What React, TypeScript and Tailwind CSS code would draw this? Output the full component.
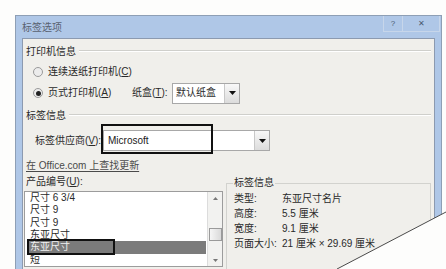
import React from "react";

const items = ["尺寸 6 3/4", "尺寸 9", "尺寸 9", "东亚尺寸", "东亚尺寸", "短"];

const info = [
  ["类型:", "东亚尺寸名片"],
  ["高度:", "5.5 厘米"],
  ["宽度:", "9.1 厘米"],
  ["页面大小:", "21 厘米 × 29.69 厘米"],
];

function Key({ k }: { k: string }) {
  return (
    <>
      (<span className="underline underline-offset-1">{k}</span>)
    </>
  );
}

function Radio({ checked }: { checked?: boolean }) {
  return (
    <span className="w-[10px] h-[10px] rounded-full border border-[#9a9a9a] bg-[#ececec] flex items-center justify-center">
      {checked && <span className="w-[5px] h-[5px] rounded-full bg-[#222]" />}
    </span>
  );
}

function DropButton() {
  return (
    <span className="w-[15px] h-full border-l border-[#c8c8c8] bg-gradient-to-b from-[#f8f8f8] to-[#dcdcdc] flex items-center justify-center">
      <svg width="7" height="4" viewBox="0 0 7 4">
        <path d="M0 0h7L3.5 4z" fill="#111" />
      </svg>
    </span>
  );
}

function GroupHeader({ label }: { label: string }) {
  return (
    <div className="flex items-center h-[16px] pl-[3px] pr-[3px] gap-[3px]">
      <span>{label}</span>
      <div className="flex-1 border-t border-[#cfcfcb] border-b border-b-white mt-[-2px]" />
    </div>
  );
}

export default function App() {
  return (
    <div className="relative w-[446px] h-[269px] overflow-hidden bg-[#fdfdfc] text-[10px] leading-none text-[#2a2a2a] font-['Liberation_Sans','Noto_Sans_CJK_SC',sans-serif]">
      <div className="ml-[15px] mt-[15px] w-[427px] h-[300px] border border-[#8e9fb5] bg-[#afc7e7] flex flex-col">
        {/* title bar */}
        <div className="h-[22px] flex items-start justify-between">
          <span className="pl-[6px] pt-[7px] text-[#5a6270]">标签选项</span>
          <div className="flex mr-[1px] h-[16px]">
            <div className="w-[20px] h-full border border-[#c7d6ea] border-t-0 flex items-center justify-center text-[8px] text-[#4a5a70]">
              ?
            </div>
            <div className="w-[37px] h-full border border-[#c7d6ea] border-t-0 border-l-0 flex items-center justify-center text-[8px] text-[#4a5a70]">
              ✕
            </div>
          </div>
        </div>

        {/* client area */}
        <div className="flex-1 mx-[6px] border border-[#8c9ab0] bg-[#f0efeb] flex flex-col">
          <div className="mt-[5px]">
            <GroupHeader label="打印机信息" />
          </div>

          <div className="mt-[2px] h-[20px] flex items-center pl-[10px] gap-[5px]">
            <Radio />
            <span>
              连续送纸打印机<Key k="C" />
            </span>
          </div>

          <div className="h-[22px] flex items-center pl-[10px]">
            <Radio checked />
            <span className="ml-[5px] w-[80px]">
              页式打印机<Key k="A" />
            </span>
            <span className="ml-[4px] w-[40px]">
              纸盒<Key k="T" />:
            </span>
            <div className="w-[68px] h-[21px] border border-[#a8a8a8] bg-white flex items-stretch">
              <span className="flex-1 flex items-center pl-[3px]">默认纸盒</span>
              <DropButton />
            </div>
          </div>

          <div className="mt-[4px]">
            <GroupHeader label="标签信息" />
          </div>

          <div className="mt-[6px] h-[21px] flex items-center pl-[12px]">
            <span className="w-[68px]">
              标签供应商<Key k="V" />:
            </span>
            <div className="relative w-[167px] h-[21px] border border-[#a8a8a8] bg-white flex items-stretch">
              <span className="flex-1 flex items-center pl-[4px] text-[#1a1a1a]">Microsoft</span>
              <DropButton />
              <div className="absolute left-[-3px] top-[-7px] w-[112px] h-[30px] border-2 border-[#111]" />
            </div>
          </div>

          <div className="mt-[7px] h-[16px] flex items-center pl-[3px]">
            <span className="underline underline-offset-2 text-[#4a4a4a]">在 Office.com 上查找更新</span>
          </div>

          <div className="flex">
            {/* product list */}
            <div className="w-[200px] flex flex-col">
              <div className="h-[16px] flex items-center pl-[3px]">
                产品编号<Key k="U" />:
              </div>
              <div className="mt-[1px] ml-[1px] h-[76px] border border-[#9c9c9c] bg-white flex overflow-hidden">
                <div className="flex-1 flex flex-col pl-[2px] pr-[1px]">
                  {items.map((it, i) => (
                    <div
                      key={i}
                      className={
                        i === 4
                          ? "relative h-[12.5px] flex items-center pl-[3px] bg-[#7b7b7b] text-[#f0f0f0]"
                          : "h-[12.5px] flex items-center pl-[3px]"
                      }
                    >
                      {it}
                      {i === 4 && (
                        <div className="absolute left-0 top-[-2px] w-[88px] h-[16px] border-2 border-[#111]" />
                      )}
                    </div>
                  ))}
                </div>
                <div className="w-[15px] bg-[#f2f2f0] border-l border-[#dcdcdc] flex flex-col items-center">
                  <div className="h-[12px] flex items-center justify-center">
                    <svg width="5" height="3" viewBox="0 0 5 3">
                      <path d="M0 3h5L2.5 0z" fill="#777" />
                    </svg>
                  </div>
                  <div className="mt-[24px] w-[13px] h-[13px] border border-[#9a9a9a] bg-gradient-to-r from-[#f6f6f6] to-[#dadada]" />
                  <div className="mt-[14px] h-[10px] flex items-center justify-center">
                    <svg width="5" height="3" viewBox="0 0 5 3">
                      <path d="M0 0h5L2.5 3z" fill="#777" />
                    </svg>
                  </div>
                </div>
              </div>
            </div>

            {/* label info group */}
            <fieldset className="ml-[3px] mt-[1px] w-[205px] h-[110px] border border-[#d2d2ce] pl-[7px]">
              <legend className="h-[16px] px-[1px] ml-[-1px] flex items-center">标签信息</legend>
              {info.map(([k, v]) => (
                <div key={k} className="h-[15px] flex items-center">
                  <span className="w-[48px]">{k}</span>
                  <span>{v}</span>
                </div>
              ))}
            </fieldset>
          </div>
        </div>
      </div>

      {/* torn corner */}
      <svg className="absolute inset-0 pointer-events-none" width="446" height="269" viewBox="0 0 446 269">
        <polygon points="337,269 446,212 446,269" fill="#fdfdfc" />
        <line x1="337" y1="269" x2="446" y2="212" stroke="#4a4a4a" strokeWidth="1" />
      </svg>
    </div>
  );
}
